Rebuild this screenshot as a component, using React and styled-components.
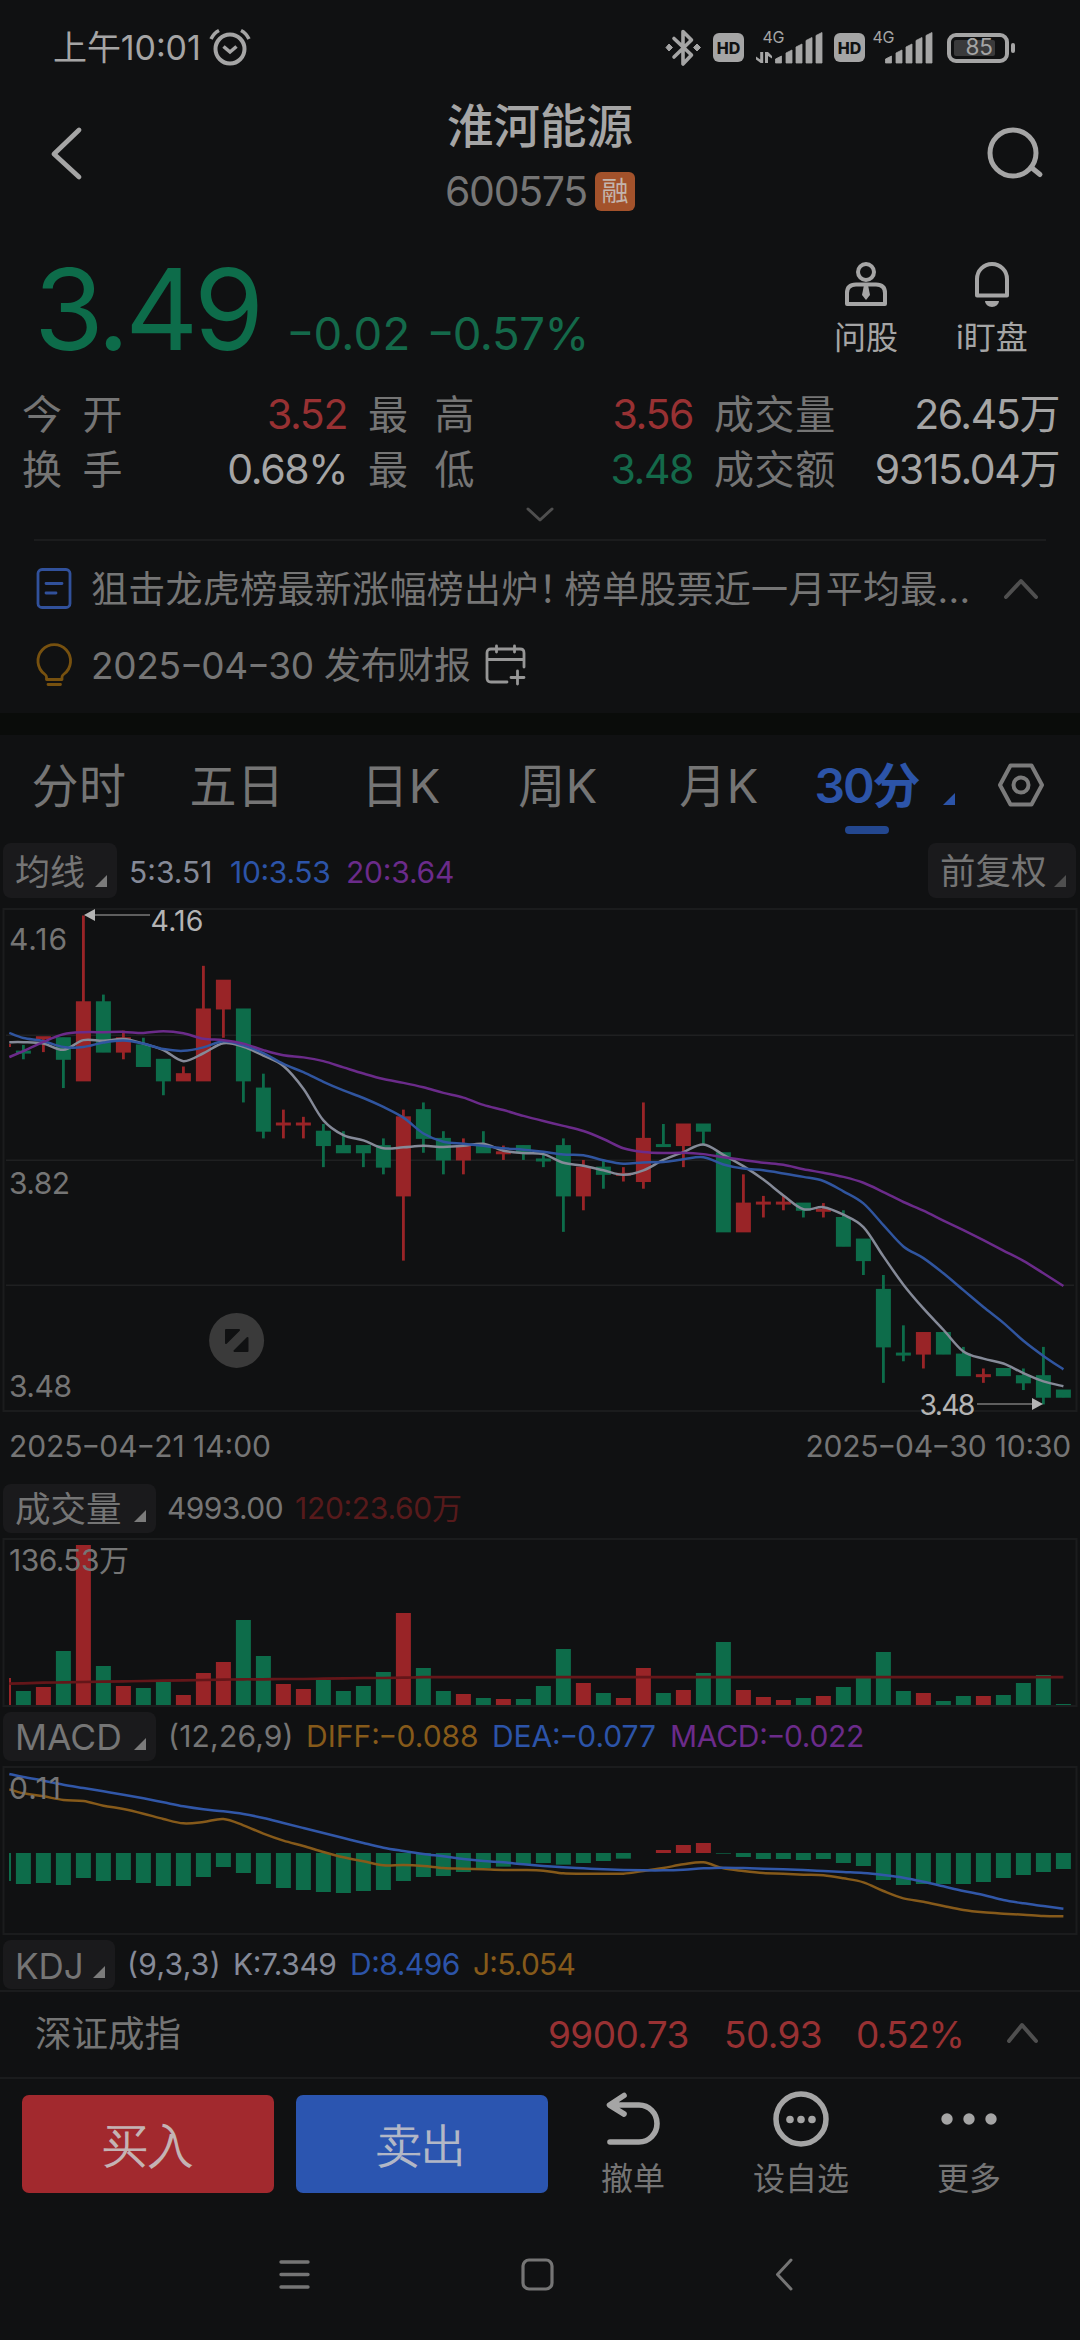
import React from "react";
import styled, { createGlobalStyle } from "styled-components";

const C = {
  bg: "#101112",
  bright: "#a5a5a5",
  gray: "#757575",
  dim: "#4f4f4f",
  line: "#1b1c1d",
  green: "#0d6c4a",
  greenText: "#14694a",
  red: "#992427",
  redText: "#983133",
  blue: "#2c54a8",
  purple: "#6b2b8a",
  orange: "#865a1a",
  silver: "#858a98",
};

const Global = createGlobalStyle`
  * { box-sizing: border-box; }
  html, body { margin: 0; background: ${C.bg}; }
  body, svg text {
    font-family: Inter, "Noto Sans CJK SC", sans-serif;
    font-feature-settings: "case" 1;
  }
  svg { display: block; overflow: visible; flex: none; }
`;

const Screen = styled.div`
  width: 1080px;
  height: 2340px;
  background: ${C.bg};
  overflow: hidden;
  display: flex;
  flex-direction: column;
`;

const Label = styled.span`
  display: block;
  white-space: pre;
  line-height: 1;
  font-size: ${(p) => p.$size}px;
  font-weight: ${(p) => p.$weight || 400};
  color: ${(p) => p.$color || C.gray};
  letter-spacing: ${(p) => p.$ls || 0}px;
  word-spacing: ${(p) => p.$ws || 0}px;
`;
const Dash = styled.span`
  display: inline-block;
  margin: 0 0.05em;
  transform: scaleX(1.35);
`;
// Text whose hyphens are drawn wide, as figures need them
function N({ children, ...rest }) {
  if (typeof children !== "string" || !children.includes("-")) {
    return <Label {...rest}>{children}</Label>;
  }
  return (
    <Label {...rest}>
      {children.split(/(-)/).map((s, i) => (s === "-" ? <Dash key={i}>-</Dash> : s))}
    </Label>
  );
}

const StatusBar = styled.header`
  height: 94px;
  padding: 1px 65px 0 53px;
  display: flex;
  align-items: center;
  justify-content: space-between;
`;
const StatusGroup = styled.div`
  display: flex;
  align-items: center;
  gap: ${(p) => p.$gap || 0}px;
`;

const TitleBar = styled.div`
  height: 116px;
  padding: 0 35px 0 50px;
  display: grid;
  grid-template-columns: 200px 1fr 200px;
  align-items: center;
`;
const TitleStack = styled.div`
  display: flex;
  flex-direction: column;
  align-items: center;
  gap: 21px;
  padding: 9px 15px 0 0;
`;
const CodeLine = styled.div`
  display: flex;
  align-items: center;
  gap: 8px;
`;
const Badge = styled.div`
  width: 40px;
  height: 39px;
  border-radius: 6px;
  background: #a3522b;
  display: grid;
  place-items: center;
`;
const RightCell = styled.div`
  display: flex;
  justify-content: flex-end;
`;

const PriceRow = styled.div`
  height: 170px;
  padding: 43px 25px 0 34px;
  display: flex;
  align-items: flex-start;
`;
const Quote = styled.div`
  flex: 1;
  display: flex;
  align-items: baseline;
`;
const Change = styled.div`
  display: flex;
  gap: 17px;
  margin-left: 28px;
  padding-top: 1px;
`;
const ActionTile = styled.div`
  width: ${(p) => p.$w || 120}px;
  padding-top: ${(p) => p.$pt || 0}px;
  display: flex;
  flex-direction: column;
  align-items: center;
  gap: ${(p) => p.$gap || 14}px;
`;

const Stats = styled.div`
  height: 118px;
  padding: 7px 21px 0 22px;
  display: grid;
  grid-template-columns: 325px 21px 325px 21px 345px;
  grid-auto-rows: 55px;
`;
const Stat = styled.div`
  grid-column: ${(p) => p.$col};
  display: flex;
  align-items: center;
  justify-content: space-between;
`;
const Expand = styled.div`
  height: 41px;
  padding-bottom: 7px;
  display: grid;
  place-items: center;
`;

const News = styled.section`
  margin: 0 34px;
  height: 174px;
  border-top: 2px solid ${C.line};
  padding-top: 10px;
`;
const NewsRow = styled.div`
  height: 76px;
  padding-right: 4px;
  display: flex;
  align-items: center;
`;
const NewsText = styled.div`
  margin: 0 ${(p) => (p.$grow ? "auto" : "14px")} 0 19px;
`;
const NarrowMark = styled.span`
  letter-spacing: -11px;
`;
const Gap = styled.div`
  height: 22px;
  background: #0a0c0a;
`;

const Tabs = styled.nav`
  height: 103px;
  display: grid;
  grid-template-columns: 158px 158px 170px 144px 178px 117px 1fr;
`;
const Tab = styled.div`
  padding-top: 27px;
  display: flex;
  flex-direction: column;
  align-items: center;
  gap: 16px;
`;
const Indicator = styled.div`
  width: 44px;
  height: 8px;
  border-radius: 4px;
  background: #23478f;
`;
const TabTools = styled.div`
  display: flex;
  align-items: flex-start;
  gap: 43px;
  padding: 28px 0 0 18px;
`;
const Corner = styled.i`
  display: block;
  width: 12px;
  height: 12px;
  margin-top: ${(p) => p.$top || 0}px;
  background: ${(p) => p.$color || "#7b7b7b"};
  clip-path: polygon(100% 0, 100% 100%, 0 100%);
`;

const Legend = styled.div`
  height: ${(p) => p.$h}px;
  padding: ${(p) => p.$pt || 0}px 3px 0;
  display: grid;
  grid-template-columns: ${(p) => p.$cols};
  align-items: start;
`;
const Pill = styled.div`
  height: ${(p) => p.$h || 49}px;
  margin-right: ${(p) => p.$mr || 0}px;
  padding: 3px 10px 0 12px;
  border-radius: 8px;
  background: #1a1a1c;
  display: flex;
  align-items: center;
  justify-content: space-between;
`;
const LegendItem = styled.div`
  height: ${(p) => p.$h || 47}px;
  display: flex;
  align-items: center;
`;

const Dates = styled.div`
  height: 71px;
  padding: 0 9px 5px;
  display: flex;
  align-items: center;
  justify-content: space-between;
`;

const IndexBar = styled.div`
  height: 87px;
  border-top: 2px solid ${C.line};
  padding: 0 0 1px 35px;
  display: grid;
  grid-template-columns: 513px 176px 132px 150px auto;
  align-items: center;
`;
const TradeBar = styled.div`
  height: 146px;
  border-top: 2px solid ${C.line};
  padding: 12px 0 0 22px;
  display: grid;
  grid-template-columns: 252px 252px 1fr;
  column-gap: 22px;
`;
const TradeButton = styled.button`
  height: 98px;
  margin-top: 4px;
  border: 0;
  border-radius: 7px;
  padding: 3px 0 0;
  background: ${(p) => p.$bg};
  display: grid;
  place-items: center;
`;
const TradeActions = styled.div`
  display: flex;
  margin-left: -21px;
`;
const NavBar = styled.footer`
  flex: 1;
  padding-top: 35px;
  display: grid;
  grid-template-columns: 279px 242px 254px auto;
`;

/* ---------- market data ---------- */
// [up, high, bodyTop, bodyBottom, low] in cents below 4.16
const CANDLES = [
  [0, 18, 19, 19, 20], [1, 17, 17, 17, 19], [0, 17, 17, 20, 24], [1, 0, 12, 23, 23],
  [0, 11, 12, 19, 19], [1, 16, 17, 19, 20], [0, 17, 18, 21, 21], [0, 20, 20, 23, 25],
  [1, 21, 22, 23, 23], [1, 7, 13, 23, 23], [1, 9, 9, 13, 17], [0, 13, 13, 23, 26],
  [0, 22, 24, 30, 31], [1, 27, 29, 29, 31], [1, 28, 29, 29, 31], [0, 29, 30, 32, 35],
  [0, 30, 32, 33, 33], [0, 32, 32, 33, 35], [0, 31, 32, 35, 36], [1, 27, 28, 39, 48],
  [0, 26, 27, 31, 33], [0, 30, 31, 34, 36], [1, 31, 32, 34, 36], [0, 30, 32, 33, 33],
  [1, 32, 33, 33, 34], [0, 32, 32, 33, 34], [0, 33, 34, 34, 35], [0, 31, 32, 39, 44],
  [1, 34, 35, 39, 41], [0, 34, 35, 36, 38], [1, 35, 36, 36, 37], [1, 26, 31, 37, 38],
  [0, 29, 32, 32, 32], [1, 29, 29, 32, 35], [0, 29, 29, 30, 32], [0, 33, 33, 44, 44],
  [1, 36, 40, 44, 44], [1, 39, 40, 40, 42], [1, 39, 40, 40, 41], [0, 40, 40, 41, 42],
  [1, 40, 41, 41, 42], [0, 41, 42, 46, 46], [0, 45, 45, 48, 50], [0, 50, 52, 60, 65],
  [0, 57, 61, 61, 62], [1, 58, 58, 61, 63], [0, 58, 58, 61, 61], [0, 60, 61, 64, 64],
  [1, 63, 64, 64, 65], [0, 63, 63, 64, 64], [0, 63, 64, 65, 66], [0, 60, 64, 67, 68],
  [0, 66, 66, 67, 67],
];
const MA5 = [413, 413, 417, 435, 407, 409, 404, 417, 436, 468, 445, 416, 426, 452, 482, 548, 640, 683, 698, 721, 718, 714, 717, 714, 708, 728, 735, 738, 763, 772, 785, 798, 785, 755, 732, 710, 740, 773, 812, 858, 898, 892, 914, 950, 1035, 1117, 1186, 1248, 1311, 1332, 1346, 1374, 1398, 1412];
const MA10 = [386, 401, 410, 427, 427, 414, 408, 417, 433, 438, 428, 410, 422, 445, 476, 500, 528, 553, 575, 601, 632, 678, 702, 708, 714, 721, 725, 731, 739, 741, 756, 766, 762, 761, 753, 747, 768, 780, 785, 794, 804, 816, 846, 881, 944, 1006, 1040, 1084, 1133, 1182, 1228, 1280, 1324, 1363];
const MA20 = [456, 439, 412, 390, 384, 384, 383, 386, 381, 387, 403, 407, 417, 436, 451, 457, 468, 486, 504, 520, 531, 544, 560, 574, 595, 610, 627, 642, 656, 671, 694, 721, 732, 735, 734, 738, 747, 755, 763, 769, 782, 792, 804, 821, 848, 877, 902, 931, 959, 988, 1018, 1048, 1084, 1121];
const VOLUME = [42, 54, 162, 480, 117, 57, 51, 69, 30, 96, 129, 255, 147, 63, 48, 75, 42, 57, 99, 276, 111, 42, 33, 21, 18, 18, 57, 168, 66, 36, 21, 111, 36, 45, 96, 189, 45, 24, 15, 21, 27, 54, 81, 159, 42, 36, 12, 27, 27, 30, 66, 90, 3];
const MACD = [93, 90, 96, 75, 84, 81, 90, 99, 99, 72, 42, 60, 93, 105, 111, 117, 120, 114, 111, 84, 72, 69, 57, 46, 41, 34, 30, 35, 30, 24, 17, 0, -9, -24, -30, 2, 12, 18, 18, 21, 18, 30, 39, 81, 96, 93, 93, 93, 87, 75, 66, 57, 48];
const DIFF = [268, 280, 289, 300, 303, 317, 327, 341, 357, 370, 366, 357, 376, 401, 422, 438, 456, 472, 484, 496, 495, 498, 504, 506, 508, 510, 510, 512, 520, 521, 521, 521, 513, 504, 493, 487, 505, 513, 519, 521, 524, 526, 535, 547, 573, 595, 605, 618, 630, 637, 641, 644, 648, 649];
const DEA = [222, 231, 242, 254, 264, 274, 284, 295, 307, 319, 328, 334, 342, 354, 369, 384, 399, 414, 429, 443, 453, 462, 469, 477, 483, 487, 493, 498, 502, 505, 508, 510, 511, 511, 509, 505, 503, 504, 506, 508, 510, 513, 516, 519, 525, 533, 545, 559, 573, 585, 600, 610, 618, 626];
const VOLAVG = [851, 850, 848, 847, 846, 845, 844, 843, 842, 841, 840, 839, 838, 838, 837, 837, 836, 835, 834, 834, 833];

const cx = (i) => 23.4 + 20 * i;
const lineX = (k) => (k === 0 ? 9.3 : cx(k - 1));

// Catmull-Rom spline through the points, written as cubic segments
function spline(ys) {
  const p = ys.map((y, k) => [lineX(k), y]);
  let d = `M${p[0][0]} ${p[0][1]}`;
  for (let i = 0; i < p.length - 1; i++) {
    const a = p[i - 1] || p[i];
    const b = p[i];
    const c = p[i + 1];
    const e = p[i + 2] || c;
    d += `C${b[0] + (c[0] - a[0]) / 6} ${b[1] + (c[1] - a[1]) / 6} ${c[0] - (e[0] - b[0]) / 6} ${c[1] - (e[1] - b[1]) / 6} ${c[0]} ${c[1]}`;
  }
  return d;
}

const Frame = ({ h }) => (
  <rect x="3.5" y="1" width="1073" height={h - 2} fill="none" stroke={C.line} strokeWidth="2" />
);

function PriceChart() {
  const y = (n) => 7.5 + n * 7.19;
  const ma = (arr) => spline(arr.map((v) => v / 2.904 - 8));
  return (
    <svg width="1080" height="505" viewBox="0 0 1080 505">
      <Frame h={504} />
      {[127.3, 252.3, 377.3].map((g) => (
        <path key={g} d={`M6 ${g}H1074`} stroke="#1f2021" strokeWidth="1.4" />
      ))}
      <rect x="9" y="136" width="2" height="3" fill={C.red} />
      {CANDLES.map(([up, hi, t, b, lo], i) => {
        const col = up ? C.red : C.green;
        const h = Math.max(3, y(b) - y(t));
        return (
          <g key={i} fill={col}>
            <rect x={cx(i) - 1.4} y={y(hi)} width="2.8" height={y(lo) - y(hi)} />
            <rect x={cx(i) - 7.5} y={t === b ? y(t) - 1.5 : y(t) - 0.5} width="15" height={h + (t === b ? 0 : 1)} />
          </g>
        );
      })}
      <g fill="none" strokeWidth="2.5">
        <path d={ma(MA5)} stroke={C.silver} />
        <path d={ma(MA10)} stroke="#30559f" />
        <path d={ma(MA20)} stroke={C.purple} />
      </g>
      <g stroke="#7a7a7a" strokeWidth="1.4">
        <path d="M90 7H150" />
        <path d="M977 496H1034" />
      </g>
      <g fill="#b4b4b4">
        <path d="M84 7L95 1V13Z" />
        <path d="M1043 496L1032 490V502Z" />
        <text x="150.5" y="22.5" fontSize="28.5" textLength="53" lengthAdjust="spacing">4.16</text>
        <text x="919.5" y="507" fontSize="28.5" textLength="56" lengthAdjust="spacing">3.48</text>
      </g>
      <g fill={C.gray} fontSize="30">
        <text x="9" y="42" textLength="58" lengthAdjust="spacing">4.16</text>
        <text x="9" y="286" textLength="61" lengthAdjust="spacing">3.82</text>
        <text x="9" y="489" textLength="63" lengthAdjust="spacing">3.48</text>
      </g>
      <circle cx="236.6" cy="432.4" r="27.5" fill="#3a3a3a" />
      <g fill="#101112" stroke="#101112" strokeWidth="2" strokeLinejoin="round">
        <path d="M226 422H239L226 435Z" />
        <path d="M247.500 430V443H234.500Z" />
      </g>
    </svg>
  );
}

function VolumeChart() {
  const base = 166;
  const avg = CANDLES.map((_, i) => (VOLAVG[i] || 831.5) / 3 - 138).concat([831.5 / 3 - 138]);
  return (
    <svg width="1080" height="174" viewBox="0 0 1080 174">
      <Frame h={169} />
      <rect x="9" y={base - 26} width="2" height="27" fill={C.red} />
      {VOLUME.map((v, i) => (
        <rect key={i} x={cx(i) - 7.5} y={base + 1 - v / 3} width="15" height={v / 3} fill={CANDLES[i][0] ? C.red : C.green} />
      ))}
      <path d={spline(avg)} fill="none" stroke="#641619" strokeWidth="2.6" />
      <text x="9" y="33" fontSize="30" fill={C.gray} textLength="120" lengthAdjust="spacing">136.53万</text>
    </svg>
  );
}

function MacdChart() {
  const zero = 87;
  const line = (arr) => spline(arr.map((v) => v / 3 - 66));
  return (
    <svg width="1080" height="174" viewBox="0 0 1080 174">
      <Frame h={169} />
      <rect x="9" y={zero} width="2" height="28" fill={C.green} />
      {MACD.map((v, i) => (
        <rect key={i} x={cx(i) - 7.5} y={v > 0 ? zero : zero + v / 3} width="15" height={Math.abs(v) / 3} fill={v > 0 ? C.green : C.red} />
      ))}
      <g fill="none" strokeWidth="2.5">
        <path d={line(DIFF)} stroke={C.orange} />
        <path d={line(DEA)} stroke="#3157a8" />
      </g>
      <text x="9" y="33" fontSize="30" fill={C.gray} textLength="52" lengthAdjust="spacing">0.11</text>
    </svg>
  );
}

/* ---------- icons ---------- */
const AlarmIcon = () => (
  <svg width="42" height="38" viewBox="0 0 42 38" fill="none" stroke={C.bright} strokeWidth="4">
    <circle cx="21" cy="20" r="14.5" />
    <path d="M14.500 17.500L21 23L27.500 17.500" strokeWidth="3.600" />
    <path d="M2 10Q5 4 10 1.500M40 10Q37 4 32 1.500" strokeWidth="3.600" />
  </svg>
);
const BluetoothIcon = () => (
  <svg width="37" height="40" viewBox="0 0 37 40">
    <path d="M9 10.500L26.500 27L18 36V3.500L26.500 12L9 29" fill="none" stroke={C.bright} strokeWidth="3.600" strokeLinejoin="round" strokeLinecap="round" />
    <path d="M4 16L7.500 19.500L4 23L1 19.500ZM32 16L35.500 19.500L32 23L28.500 19.500Z" fill={C.bright} stroke={C.bright} strokeLinejoin="round" />
  </svg>
);
const HdBox = styled.div`
  width: 31px;
  height: 29px;
  border-radius: 6px;
  background: ${C.bright};
  display: grid;
  place-items: center;
`;
const Hd = () => (
  <HdBox>
    <N $size={16} $weight={800} $color={C.bg}>HD</N>
  </HdBox>
);
const SignalBox = styled.div`
  margin: ${(p) => (p.$data ? "0" : "0 3px 0 -5px")};
`;
const Signal = ({ data }) => (
  <SignalBox $data={data}>
    <svg width={data ? 67 : 61} height="34" viewBox={data ? "0 0 67 34" : "6 0 61 34"} fill={C.bright}>
      <text x="6.500" y="12" fontSize="16" textLength="22" lengthAdjust="spacing">4G</text>
      {data && (
        <path d="M4.200 21V28.500L0 25.500V28.500L4.700 32H7.200V21ZM9 32V21H12L16 25V27.500L12 25V32Z" />
      )}
      <path d="M19.500 32V28L25.500 25V32ZM30 32V22L36 19V32ZM40 32V16L46 13V32ZM50 32V9.500L56 6.500V32ZM60 32V4.500L66 1.500V32Z" stroke={C.bright} strokeWidth="0.800" strokeLinejoin="round" />
    </svg>
  </SignalBox>
);
const BatteryShell = styled.div`
  width: 62px;
  height: 30px;
  border: 4px solid ${C.bright};
  border-radius: 9px;
  padding: 3px;
  display: flex;
`;
const BatteryFill = styled.div`
  width: 41px;
  height: 16px;
  border-radius: 2px;
  background: #3a3a3b;
  display: flex;
  align-items: center;
  justify-content: flex-end;
  padding-right: 2px;
`;
const BatteryCap = styled.div`
  width: 4px;
  height: 10px;
  border-radius: 2px;
  background: ${C.bright};
`;

const Stroke = ({ w, h, d, color = C.bright, sw = 4, join = "round" }) => (
  <svg width={w} height={h} viewBox={`0 0 ${w} ${h}`} fill="none" stroke={color} strokeWidth={sw} strokeLinejoin={join} strokeLinecap="round">
    <path d={d} />
  </svg>
);

const AdvisorIcon = () => (
  <svg width="44" height="46" viewBox="0 0 44 46" fill="none" stroke={C.bright} strokeWidth="4">
    <circle cx="22" cy="11" r="8" />
    <path d="M3 43V32Q3 23.500 12 23.500H32Q41 23.500 41 32V43Z" strokeLinejoin="round" />
    <path d="M20 24H24L26 34L22 39L18 34Z" fill={C.bright} stroke="none" />
  </svg>
);
const BellIcon = () => (
  <svg width="36" height="46" viewBox="0 0 36 46">
    <path d="M3 34.500V18A15 15 0 0 1 33 18V34.500Z" fill="none" stroke={C.bright} strokeWidth="4" strokeLinejoin="round" />
    <path d="M11 40H25A7 6 0 0 1 11 40Z" fill={C.bright} />
  </svg>
);
const DocIcon = () => (
  <svg width="38" height="42" viewBox="0 0 38 42" fill="none" stroke="#31519b" strokeWidth="2.800">
    <rect x="4" y="1.500" width="32" height="38" rx="4" />
    <path d="M12 15.500H28M12 25H22" strokeLinecap="round" />
  </svg>
);
const BulbIcon = () => (
  <svg width="38" height="44" viewBox="0 0 38 44" fill="none" stroke="#77510f" strokeWidth="2.800" strokeLinecap="round" strokeLinejoin="round">
    <path d="M12.500 36.500V34Q12.500 32.500 10.500 31A16.300 16.300 0 1 1 30 31Q28 32.500 28 34V36.500ZM14 41.500H26.500" />
  </svg>
);
const CalendarIcon = () => (
  <svg width="42" height="42" viewBox="0 0 42 42" fill="none" stroke="#969696" strokeWidth="2.800" strokeLinecap="round">
    <path d="M39 23V9Q39 5 35 5H6Q2 5 2 9V34Q2 38 6 38H22M2 15.500H39M11.500 2V8M29.500 2V8M32.500 27V40M26 33.500H39" />
  </svg>
);
const GearIcon = () => (
  <svg width="46" height="44" viewBox="0 0 46 44" fill="none" stroke="#7b7b7b" strokeWidth="4" strokeLinejoin="round">
    <path d="M12.500 2.500H33.500L44 22L33.500 41.500H12.500L2 22Z" />
    <circle cx="23" cy="22" r="7.500" />
  </svg>
);
const MoreCircleIcon = () => (
  <svg width="56" height="56" viewBox="0 0 56 56" fill={C.bright}>
    <circle cx="28" cy="28" r="25" fill="none" stroke={C.bright} strokeWidth="5.500" />
    <circle cx="17" cy="28.500" r="3.800" />
    <circle cx="28" cy="28.500" r="3.800" />
    <circle cx="39" cy="28.500" r="3.800" />
  </svg>
);
const DotsIcon = () => (
  <svg width="56" height="56" viewBox="0 0 56 56" fill={C.bright}>
    <circle cx="6" cy="28" r="5.700" />
    <circle cx="28" cy="28" r="5.700" />
    <circle cx="50" cy="28" r="5.700" />
  </svg>
);

const STATS = [
  [
    ["今 开", "3.52", C.redText, 8],
    ["最 高", "3.56", C.redText, 14],
    ["成交量", "26.45万", C.bright, 0],
  ],
  [
    ["换 手", "0.68%", C.bright, 8],
    ["最 低", "3.48", C.greenText, 14],
    ["成交额", "9315.04万", C.bright, 0],
  ],
];

export default function App() {
  return (
    <Screen>
      <Global />
      <StatusBar>
        <StatusGroup $gap={8}>
          <N $size={34} $color={C.bright} $ls={-0.1}>上午10:01</N>
          <AlarmIcon />
        </StatusGroup>
        <StatusGroup $gap={11.5}>
          <BluetoothIcon />
          <Hd />
          <Signal data />
          <Hd />
          <Signal />
          <StatusGroup $gap={2}>
            <BatteryShell>
              <BatteryFill>
                <N $size={22.5} $color={C.bright}>85</N>
              </BatteryFill>
            </BatteryShell>
            <BatteryCap />
          </StatusGroup>
        </StatusGroup>
      </StatusBar>

      <TitleBar>
        <Stroke w={34} h={54} d="M29 4L4 28L29 51" sw={4.8} />
        <TitleStack>
          <N $size={46.5} $weight={500} $color={C.bright}>淮河能源</N>
          <CodeLine>
            <N $size={41} $ls={-1.3}>600575</N>
            <Badge>
              <N $size={27} $color="#c3b5ad">融</N>
            </Badge>
          </CodeLine>
        </TitleStack>
        <RightCell>
          <svg width="58" height="52" viewBox="0 0 58 52" fill="none" stroke={C.bright} strokeWidth="5" strokeLinecap="round">
            <circle cx="26" cy="26" r="23" />
            <path d="M45 41L53 47.500" />
          </svg>
        </RightCell>
      </TitleBar>

      <PriceRow>
        <Quote>
          <N $size={113} $color={C.green} $ls={-4.3}>3.49</N>
          <Change>
            <N $size={45.5} $color={C.greenText} $ls={0.3}>-0.02</N>
            <N $size={45.5} $color={C.greenText} $ls={-0.4}>-0.57%</N>
          </Change>
        </Quote>
        <ActionTile $w={126} $gap={15} $pt={8}>
          <AdvisorIcon />
          <N $size={32} $color={C.bright}>问股</N>
        </ActionTile>
        <ActionTile $w={126} $gap={15} $pt={8}>
          <BellIcon />
          <N $size={32} $color={C.bright}>i盯盘</N>
        </ActionTile>
      </PriceRow>

      <Stats>
        {STATS.map((row) => row.map(([label, value, color, ws], k) => (
          <Stat key={label} $col={k * 2 + 1}>
            <N $size={40} $ls={0.6} $ws={ws}>{label}</N>
            <N $size={41} $color={color} $ls={-1.4}>{value}</N>
          </Stat>
        )))}
      </Stats>
      <Expand>
        <Stroke w={30} h={18} d="M3 3L15 14L27 3" color={C.dim} sw={3} />
      </Expand>

      <News>
        <NewsRow>
          <DocIcon />
          <NewsText $grow>
            <Label $size={37} $ls={0.3}>
              狙击龙虎榜最新涨幅榜出炉<NarrowMark>！</NarrowMark>榜单股票近一月平均最...
            </Label>
          </NewsText>
          <Stroke w={40} h={22} d="M4 19L19 3L34 19" color={C.dim} sw={4} />
        </NewsRow>
        <NewsRow>
          <BulbIcon />
          <NewsText>
            <N $size={37} $ls={-0.3}>2025-04-30 发布财报</N>
          </NewsText>
          <CalendarIcon />
        </NewsRow>
      </News>
      <Gap />

      <Tabs>
        {["分时", "五日", "日K", "周K", "月K"].map((t) => (
          <Tab key={t}><N $size={47} $ls={0.5}>{t}</N></Tab>
        ))}
        <Tab>
          <N $size={48} $weight={600} $color={C.blue} $ls={-2}>30分</N>
          <Indicator />
        </Tab>
        <TabTools>
          <Corner $color={C.blue} $top={30} />
          <GearIcon />
        </TabTools>
      </Tabs>

      <Legend $h={70} $pt={5} $cols="126px 101px 116px 582px 148px">
        <Pill $h={55} $mr={12}>
          <N $size={35}>均线</N>
          <Corner $top={18} />
        </Pill>
        <LegendItem $h={57}><N $size={30} $color={C.silver}>5:3.51</N></LegendItem>
        <LegendItem $h={57}><N $size={30} $color={C.blue} $ls={-0.3}>10:3.53</N></LegendItem>
        <LegendItem $h={57}><N $size={30} $color={C.purple} $ls={-0.2}>20:3.64</N></LegendItem>
        <Pill $h={55}>
          <N $size={35.5}>前复权</N>
          <Corner $top={18} $color={C.dim} />
        </Pill>
      </Legend>
      <PriceChart />
      <Dates>
        <N $size={30} $ls={-0.05}>2025-04-21 14:00</N>
        <N $size={30} $ls={-0.2}>2025-04-30 10:30</N>
      </Dates>

      <Legend $h={54} $cols="164px 128px 1fr">
        <Pill $mr={11}>
          <N $size={35.5}>成交量</N>
          <Corner $top={12} />
        </Pill>
        <LegendItem><N $size={30} $ls={-0.6}>4993.00</N></LegendItem>
        <LegendItem><N $size={30} $color="#571a1b" $ls={-0.3}>120:23.60万</N></LegendItem>
      </Legend>
      <VolumeChart />

      <Legend $h={54} $cols="165px 138px 186px 178px 1fr">
        <Pill $mr={12}>
          <N $size={35.5}>MACD</N>
          <Corner $top={12} />
        </Pill>
        <LegendItem><N $size={30} $ls={0.2}>(12,26,9)</N></LegendItem>
        <LegendItem><N $size={30} $color={C.orange}>DIFF:-0.088</N></LegendItem>
        <LegendItem><N $size={30} $color={C.blue} $ls={-0.1}>DEA:-0.077</N></LegendItem>
        <LegendItem><N $size={30} $color={C.purple} $ls={-0.3}>MACD:-0.022</N></LegendItem>
      </Legend>
      <MacdChart />

      <Legend $h={50} $cols="124px 106px 117px 123px 1fr">
        <Pill $mr={12}>
          <N $size={35}>KDJ</N>
          <Corner $top={12} />
        </Pill>
        <LegendItem><N $size={30} $color={C.silver} $ls={0.3}>(9,3,3)</N></LegendItem>
        <LegendItem><N $size={30} $color={C.silver} $ls={-0.4}>K:7.349</N></LegendItem>
        <LegendItem><N $size={30} $color={C.blue} $ls={-0.5}>D:8.496</N></LegendItem>
        <LegendItem><N $size={30} $color={C.orange} $ls={-0.8}>J:5.054</N></LegendItem>
      </Legend>

      <IndexBar>
        <N $size={36.5}>深证成指</N>
        <N $size={37} $color={C.redText} $ls={-0.6}>9900.73</N>
        <N $size={37} $color={C.redText} $ls={-0.6}>50.93</N>
        <N $size={37} $color={C.redText} $ls={-1.3}>0.52%</N>
        <Stroke w={36} h={22} d="M3 18L16 2L30 18" color={C.dim} sw={4} />
      </IndexBar>

      <TradeBar>
        <TradeButton $bg="#a2292e"><N $size={46} $color="#c4b3b4">买入</N></TradeButton>
        <TradeButton $bg="#2b55b0"><N $size={46} $color="#b2b7c6">卖出</N></TradeButton>
        <TradeActions>
          <ActionTile $w={168} $gap={16}>
            <Stroke w={56} h={56} d="M6 14H34A18 18.500 0 0 1 34 51H5M19 4.500L4.500 14L19 23" sw={5.6} />
            <N $size={32}>撤单</N>
          </ActionTile>
          <ActionTile $w={168} $gap={16}>
            <MoreCircleIcon />
            <N $size={32}>设自选</N>
          </ActionTile>
          <ActionTile $w={168} $gap={16}>
            <DotsIcon />
            <N $size={32}>更多</N>
          </ActionTile>
        </TradeActions>
      </TradeBar>

      <NavBar>
        <span />
        <Stroke w={32} h={34} d="M2 4H29M2 16.500H29M2 29H29" color={C.gray} sw={3.4} />
        <svg width="33" height="34" viewBox="0 0 33 34" fill="none" stroke={C.gray} strokeWidth="3.200">
          <rect x="2" y="2" width="29" height="29" rx="6" />
        </svg>
        <Stroke w={20} h={34} d="M16 2L2.500 16.500L16 31" color={C.gray} sw={3} />
      </NavBar>
    </Screen>
  );
}
